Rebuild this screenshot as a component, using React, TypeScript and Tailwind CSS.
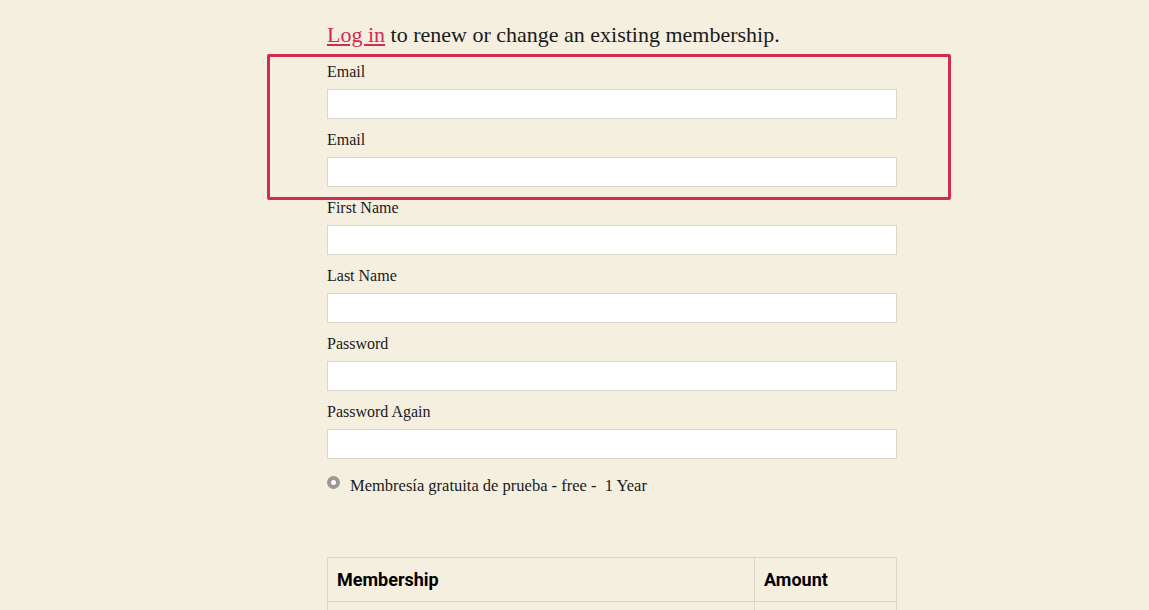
const fields = ["Email", "Email", "First Name", "Last Name", "Password", "Password Again"];

export default function App() {
  return (
    <div className="relative h-[610px] w-full overflow-hidden bg-[#f5efe0] font-['Liberation_Serif',serif] text-[#1a1a1a]">
      <div className="ml-[327px] w-[570px] pt-[22px]">
        <p className="text-[22px] leading-[26px]">
          <a href="#" className="text-[#d22a52] underline underline-offset-2">
            Log in
          </a>{" "}
          to renew or change an existing membership.
        </p>

        <form className="mt-[14px] flex flex-col">
          {fields.map((label, i) => (
            <div key={i} className="flex flex-col pb-[11px]">
              <label className="text-[16px] leading-[20px]">{label}</label>
              <input
                type={label.startsWith("Password") ? "password" : "text"}
                className="mt-[7px] h-[30px] w-full border border-[#dcd5ca] bg-white outline-none"
              />
            </div>
          ))}

          <label className="mt-[2px] flex items-start gap-[10px] text-[16.5px] leading-[20px]">
            <span className="mt-[4px] flex h-[13px] w-[13px] shrink-0 items-center justify-center rounded-full bg-[#9a9894]">
              <span className="h-[5px] w-[5px] rounded-full bg-white" />
            </span>
            <span className="mt-[4px]">Membresía gratuita de prueba - free -&nbsp; 1 Year</span>
          </label>
        </form>

        <table className="mt-[61px] w-full border-collapse font-['Roboto',sans-serif]">
          <thead>
            <tr>
              <th className="h-[44px] border border-[#dcd5ca] px-[9px] text-left text-[18px] font-bold text-black">
                Membership
              </th>
              <th className="h-[44px] w-[142px] border border-[#dcd5ca] px-[9px] text-left text-[18px] font-bold text-black">
                Amount
              </th>
            </tr>
          </thead>
          <tbody>
            <tr>
              <td className="h-[44px] border border-[#dcd5ca]" />
              <td className="h-[44px] border border-[#dcd5ca]" />
            </tr>
          </tbody>
        </table>
      </div>

      {/* highlight box */}
      <div className="pointer-events-none absolute left-[267px] top-[54px] h-[146px] w-[684px] rounded-[2px] border-[3.5px] border-[#d22a52]" />
    </div>
  );
}
